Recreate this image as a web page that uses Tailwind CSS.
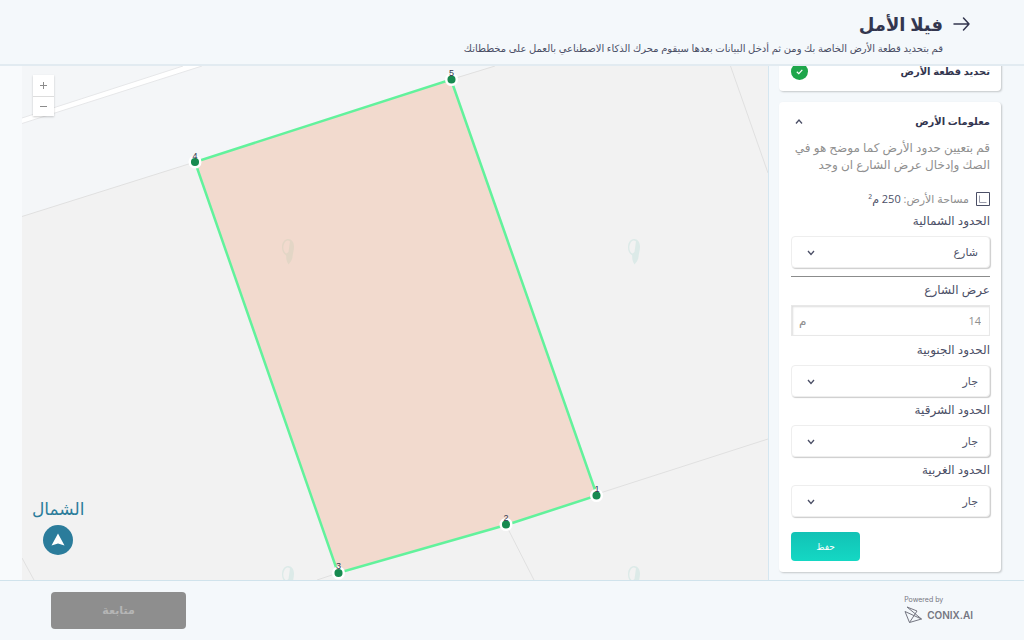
<!DOCTYPE html>
<html lang="ar" dir="rtl">
<head>
    <meta charset="UTF-8">
    <meta name="viewport" content="width=device-width, initial-scale=1.0">
    <title>فيلا الأمل</title>
    <script src="https://cdn.jsdelivr.net/npm/@tailwindcss/browser@4"></script>
</head>
<body class="h-screen flex flex-col overflow-hidden bg-[#f4f8fb] text-[#4b4f66] font-['Open_Sans','DejaVu_Sans',sans-serif]">

    <!-- Header -->
    <header class="shrink-0 flex items-start gap-2 h-[66px] pr-[53px] pt-3 border-b-2 border-[#e2ebf1]">
        <a href="#" aria-label="رجوع" class="mt-1 text-[#33364f]">
            <svg class="w-5 h-4" viewBox="0 0 20 16" fill="none" stroke="currentColor" stroke-width="1.5" stroke-linecap="round" stroke-linejoin="round">
                <path d="M3 8h15M12.500 2L18 8l-5.500 6"/>
            </svg>
        </a>
        <div>
            <h1 class="text-lg leading-6 font-bold text-[#33364f]">فيلا الأمل</h1>
            <p class="mt-1 text-[10px] leading-4 whitespace-nowrap">قم بتحديد قطعة الأرض الخاصة بك ومن ثم أدخل البيانات بعدها سيقوم محرك الذكاء الاصطناعي بالعمل على مخططاتك</p>
        </div>
    </header>

    <main class="flex-1 min-h-0 flex">
        <!-- Steps panel -->
        <aside class="w-64 shrink-0 flex flex-col justify-end gap-[11px] overflow-hidden border-l border-[#d5e6f0] pl-[10px] pr-[23px] pb-2">
            <section class="shrink-0 flex items-center justify-between h-10 pr-[11px] pl-3 bg-white rounded shadow-[1px_1px_2px_#00000033]">
                <h2 class="text-[10px] leading-4 font-bold text-[#33364f]">تحديد قطعة الأرض</h2>
                <svg class="w-[17px] h-[17px]" viewBox="0 0 17 17">
                    <circle cx="8.500" cy="8.500" r="8.500" fill="#1ea64a"/>
                    <path d="M5.800 8.700l2 1.900 3.500-3.800" fill="none" stroke="#fff" stroke-width="1.200"/>
                </svg>
            </section>

            <section class="shrink-0 pr-[11px] pl-3 pt-[10px] pb-[11px] bg-white rounded shadow-[1px_1px_2px_#00000033]">
                <div class="flex items-center justify-between h-[18px]">
                    <h2 class="text-[10px] leading-4 font-bold text-[#33364f]">معلومات الأرض</h2>
                    <button type="button" aria-label="طي" class="ml-1">
                        <svg class="w-2 h-2" viewBox="0 0 8 8" fill="none" stroke="#4b4f66" stroke-width="1.300"><path d="M1 6.500L4 3l3 3.500"/></svg>
                    </button>
                </div>
                <p class="mt-[9px] text-xs leading-[17px] text-[#8f8f8f]">قم بتعيين حدود الأرض كما موضح هو في الصك وإدخال عرض الشارع ان وجد</p>
                <div class="mt-[18px] flex items-center gap-[7px] h-4 text-[11px] leading-4">
                    <svg class="w-[14px] h-[14px]" viewBox="0 0 14 14" fill="none" stroke="#4b4f66"><path d="M.5.5h13v13H.5z"/><path d="M3.500 3.500v7h7" stroke="#9a9cab"/></svg>
                    <p><span class="text-[#8f8f8f]">مساحة الأرض:</span> 250 م²</p>
                </div>

                <form>
                    <label for="north" class="block mt-[6px] h-4 text-xs leading-4">الحدود الشمالية</label>
                    <div class="relative mt-[7px]">
                        <select id="north" class="appearance-none block w-full h-8 px-[11px] text-[11px] bg-white border border-[#eeeeee] rounded-sm shadow-[1px_1px_1px_#00000033]">
                            <option>شارع</option>
                            <option>جار</option>
                        </select>
                        <svg class="absolute left-4 top-3 w-2 h-2 pointer-events-none" viewBox="0 0 8 8" fill="none" stroke="#4b4f66" stroke-width="1.300"><path d="M1 3l3 3.500L7 3"/></svg>
                    </div>
                    <hr class="mt-2 border-[#8b8c8c]">
                    <label for="street" class="block mt-[5px] h-4 text-xs leading-4">عرض الشارع</label>
                    <div class="relative mt-[7px]">
                        <input id="street" type="text" value="14" class="block w-full h-[31px] px-2 text-[11px] text-[#8f8f8f] bg-white border border-[#e8e8e8] shadow-[inset_1px_1px_2px_#00000022]">
                        <span class="absolute left-2 top-2 text-xs leading-4 text-[#8f8f8f]">م</span>
                    </div>
                    <label for="south" class="block mt-[6px] h-4 text-xs leading-4">الحدود الجنوبية</label>
                    <div class="relative mt-[7px]">
                        <select id="south" class="appearance-none block w-full h-8 px-[11px] text-[11px] bg-white border border-[#eeeeee] rounded-sm shadow-[1px_1px_1px_#00000033]">
                            <option>جار</option>
                            <option>شارع</option>
                        </select>
                        <svg class="absolute left-4 top-3 w-2 h-2 pointer-events-none" viewBox="0 0 8 8" fill="none" stroke="#4b4f66" stroke-width="1.300"><path d="M1 3l3 3.500L7 3"/></svg>
                    </div>
                    <label for="east" class="block mt-[5px] h-4 text-xs leading-4">الحدود الشرقية</label>
                    <div class="relative mt-[7px]">
                        <select id="east" class="appearance-none block w-full h-8 px-[11px] text-[11px] bg-white border border-[#eeeeee] rounded-sm shadow-[1px_1px_1px_#00000033]">
                            <option>جار</option>
                            <option>شارع</option>
                        </select>
                        <svg class="absolute left-4 top-3 w-2 h-2 pointer-events-none" viewBox="0 0 8 8" fill="none" stroke="#4b4f66" stroke-width="1.300"><path d="M1 3l3 3.500L7 3"/></svg>
                    </div>
                    <label for="west" class="block mt-[5px] h-4 text-xs leading-4">الحدود الغربية</label>
                    <div class="relative mt-[7px]">
                        <select id="west" class="appearance-none block w-full h-8 px-[11px] text-[11px] bg-white border border-[#eeeeee] rounded-sm shadow-[1px_1px_1px_#00000033]">
                            <option>جار</option>
                            <option>شارع</option>
                        </select>
                        <svg class="absolute left-4 top-3 w-2 h-2 pointer-events-none" viewBox="0 0 8 8" fill="none" stroke="#4b4f66" stroke-width="1.300"><path d="M1 3l3 3.500L7 3"/></svg>
                    </div>
                    <div class="mt-[15px] flex justify-end">
                        <button type="button" class="w-[69px] h-[29px] rounded-sm bg-linear-to-b from-[#12c2b5] to-[#14d8c4] text-[9px] text-white">حفظ</button>
                    </div>
                </form>
            </section>
        </aside>

        <!-- Map -->
        <div class="relative flex-1 min-w-0 border-l-[22px] border-[#f8fafc] bg-[#f2f2f2]">
            <svg class="absolute inset-0 w-full h-full" viewBox="22 66 746 514" preserveAspectRatio="xMidYMid slice">
                <defs>
                    <path id="pin" fill-rule="evenodd" d="M6 0c4 0 6.200 3.500 6 8-.2 4.500-1.300 7-1.500 10-.3 3-2 5-4 7.500C5 23 4 20.500 4.200 16.500 1.500 15 0 12 0 8.500 0 3.500 2.500 0 6 0zM5.500 1.500C3 2 1.500 5 1.300 8.500c0 3 1.200 5.200 3.200 6L6.500 13 8 2.500C7.300 1.700 6.500 1.400 5.500 1.500z"/>
                </defs>
                <path d="M22 66H495L451 79 195 162 22 216.500z" fill="#f4f6f8"/>
                <path d="M22 118L183 66H202L22 123.500z" fill="#fff"/>
                <g fill="none" stroke="#e0e0e0">
                    <path d="M22 118L183 66M22 123.500L202 66" stroke="#e6e7e9"/>
                    <path d="M22 216.500L195 162M451 79.500L495 66M730.500 66L768 173M597 494L768 439M506 525L534 580M338 573L317 580M22 558L34 580"/>
                </g>
                <path d="M451 79.500L597 495.500 506 525 338 573 195 162z" fill="#f2dace" stroke="#62f29c" stroke-width="2.500"/>
                <g fill="#dceae8">
                    <use href="#pin" x="628" y="239"/>
                    <use href="#pin" x="282" y="566"/>
                    <use href="#pin" x="628" y="566"/>
                </g>
                <use href="#pin" x="282" y="239" fill="#e3d6c6"/>
                <g fill="#178a50" stroke="#fff" stroke-width="2.500">
                    <circle cx="451.500" cy="79.500" r="5.300"/>
                    <circle cx="195" cy="162" r="5.300"/>
                    <circle cx="596.500" cy="495.500" r="5.300"/>
                    <circle cx="506" cy="524.500" r="5.300"/>
                    <circle cx="338.500" cy="573" r="5.300"/>
                </g>
                <g class="font-['Liberation_Sans',sans-serif] text-[9px]" fill="#33364f" text-anchor="middle">
                    <text x="451.500" y="76">5</text>
                    <text x="195" y="159">4</text>
                    <text x="597" y="492">1</text>
                    <text x="506" y="521">2</text>
                    <text x="338.500" y="569">3</text>
                </g>
            </svg>
            <div class="absolute left-[11px] top-[9px] w-[21px] flex flex-col gap-px shadow-[0_1px_2px_#00000033] bg-[#dddddd]">
                <button type="button" aria-label="تكبير" class="flex items-center justify-center h-[21px] bg-white">
                    <svg class="w-[7px] h-[7px]" viewBox="0 0 7 7" stroke="#8c8c8c"><path d="M3.500 0v7M0 3.500h7"/></svg>
                </button>
                <button type="button" aria-label="تصغير" class="flex items-center justify-center h-[19px] bg-white">
                    <svg class="w-[7px] h-[7px]" viewBox="0 0 7 7" stroke="#8c8c8c"><path d="M0 3.500h7"/></svg>
                </button>
            </div>
            <div class="absolute left-[10px] bottom-[25px] flex flex-col items-center gap-1 text-[#2b7c9b]">
                <span class="text-[17px] leading-6">الشمال</span>
                <svg class="w-[30px] h-[30px]" viewBox="0 0 30 30">
                    <circle cx="15" cy="15" r="15" fill="currentColor"/>
                    <path d="M15 8.500L21.500 20.500 15 18.500 8.500 20.500z" fill="#fff"/>
                </svg>
            </div>
        </div>
    </main>

    <!-- Footer -->
    <footer class="shrink-0 flex items-center justify-between h-[60px] pl-[51px] pr-[51px] border-t border-[#d0e3ec]">
        <div dir="ltr" class="-mt-1 text-[#747681]">
            <p class="text-[7px] leading-3 font-['Inter',sans-serif]">Powered by</p>
            <div class="flex items-center gap-[5px]">
                <svg class="w-[18px] h-[18px]" viewBox="0 0 18 18" fill="none" stroke="currentColor" stroke-linejoin="round"><path d="M3 1L13 5 5.500 16.500 1 5.500 17.500 13 5.500 16.500M3 1L17.500 13"/></svg>
                <span class="text-[10px] leading-4 font-['Inter',sans-serif] font-semibold">CONIX.AI</span>
            </div>
        </div>
        <button type="button" disabled class="w-[135px] h-[37px] rounded bg-[#8e8e8e] text-[11px] font-bold text-[#b5b5b5]">متابعة</button>
    </footer>
</body>
</html>
